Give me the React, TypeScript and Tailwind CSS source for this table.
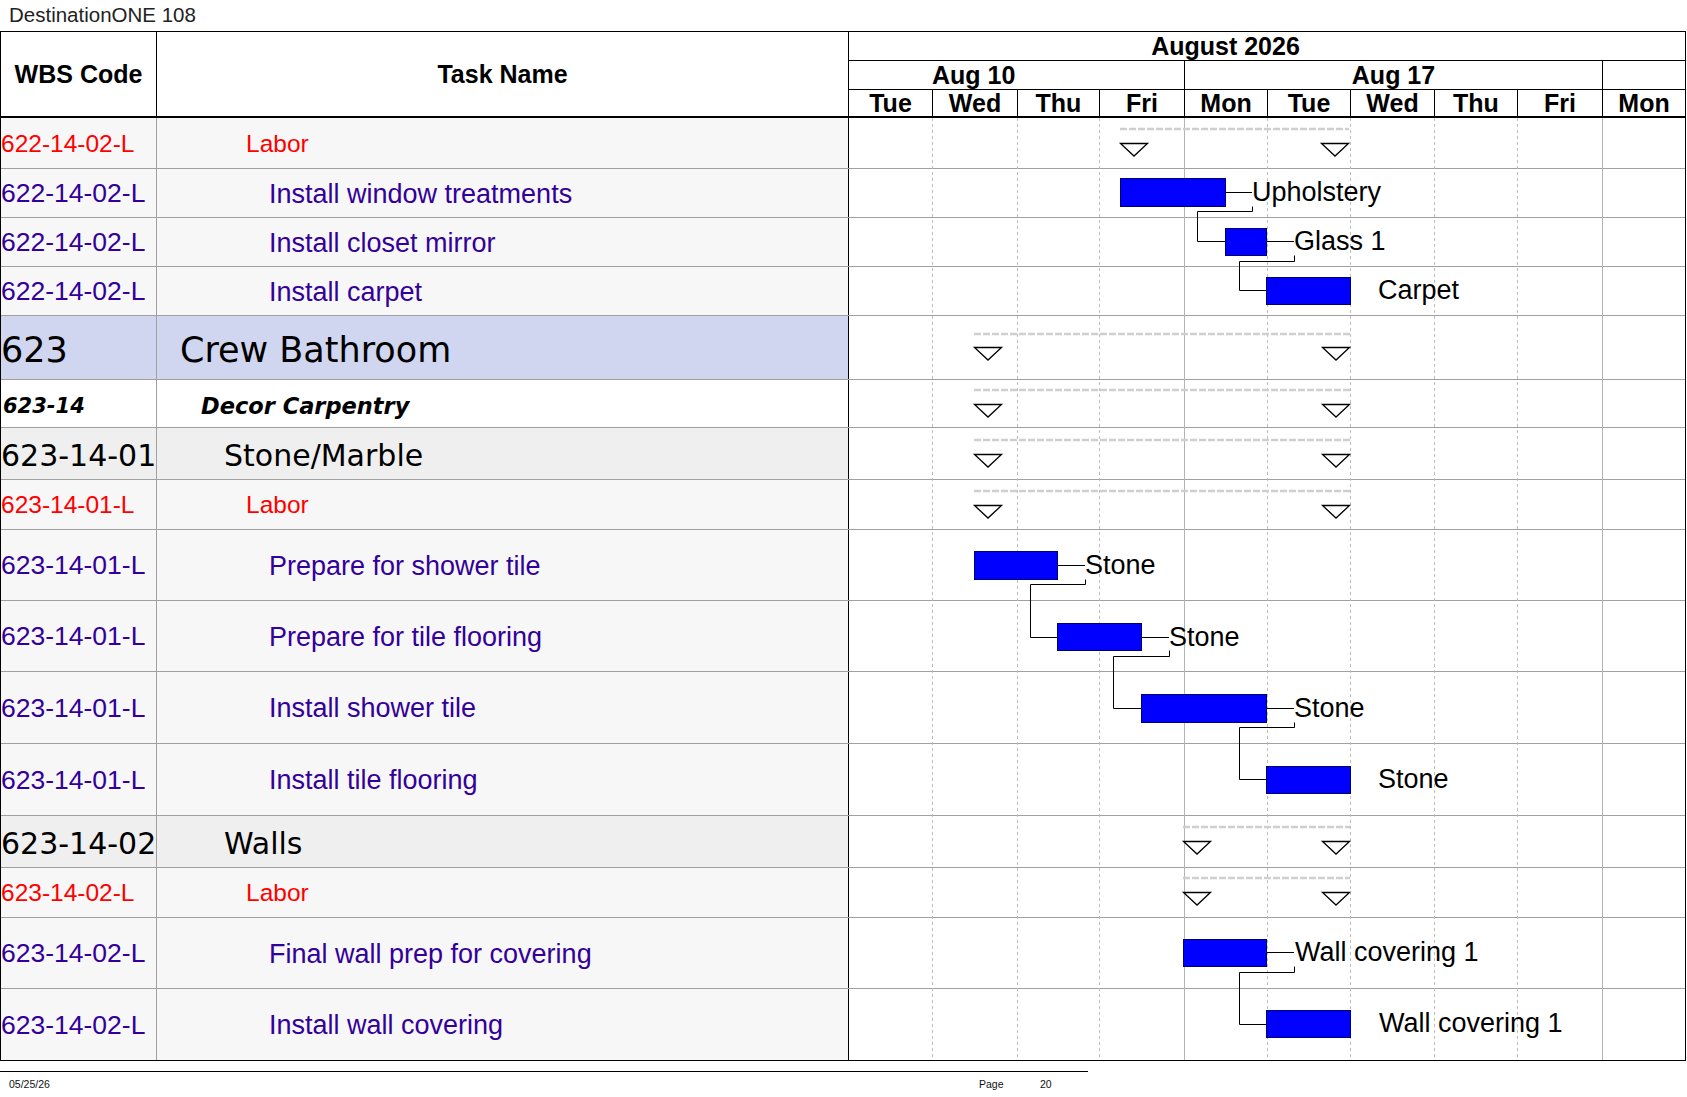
import React from "react";

type Row = {
  h: string;
  kind: "labor" | "task" | "l1" | "l2" | "l3";
  code: string;
  name: string;
};

const rows: Row[] = [
  { h: "h-[51px]", kind: "labor", code: "622-14-02-L", name: "Labor" },
  { h: "h-[49px]", kind: "task", code: "622-14-02-L", name: "Install window treatments" },
  { h: "h-[49px]", kind: "task", code: "622-14-02-L", name: "Install closet mirror" },
  { h: "h-[49px]", kind: "task", code: "622-14-02-L", name: "Install carpet" },
  { h: "h-[64px]", kind: "l1", code: "623", name: "Crew Bathroom" },
  { h: "h-[48px]", kind: "l2", code: "623-14", name: "Decor Carpentry" },
  { h: "h-[52px]", kind: "l3", code: "623-14-01", name: "Stone/Marble" },
  { h: "h-[50px]", kind: "labor", code: "623-14-01-L", name: "Labor" },
  { h: "h-[71px]", kind: "task", code: "623-14-01-L", name: "Prepare for shower tile" },
  { h: "h-[71px]", kind: "task", code: "623-14-01-L", name: "Prepare for tile flooring" },
  { h: "h-[72px]", kind: "task", code: "623-14-01-L", name: "Install shower tile" },
  { h: "h-[72px]", kind: "task", code: "623-14-01-L", name: "Install tile flooring" },
  { h: "h-[52px]", kind: "l3", code: "623-14-02", name: "Walls" },
  { h: "h-[50px]", kind: "labor", code: "623-14-02-L", name: "Labor" },
  { h: "h-[71px]", kind: "task", code: "623-14-02-L", name: "Final wall prep for covering" },
  { h: "h-[71px]", kind: "task", code: "623-14-02-L", name: "Install wall covering" },
];

const styles: Record<Row["kind"], { bg: string; code: string; name: string }> = {
  labor: {
    bg: "bg-[#f7f7f7]",
    code: "pt-[2px] text-[24.5px] text-[#ff0000] font-['Liberation_Sans',Arial,sans-serif]",
    name: "pt-[2px] pl-[89px] text-[24.5px] text-[#ff0000] font-['Liberation_Sans',Arial,sans-serif]",
  },
  task: {
    bg: "bg-[#f7f7f7]",
    code: "pt-[2px] text-[26.5px] text-[#330099] font-['Liberation_Sans',Arial,sans-serif]",
    name: "pt-[2px] pl-[112px] text-[27px] text-[#330099] font-['Liberation_Sans',Arial,sans-serif]",
  },
  l1: {
    bg: "bg-[#d0d6ef]",
    code: "pt-[6px] text-[35px] text-black font-['DejaVu_Sans',sans-serif]",
    name: "pt-[6px] pl-[23px] text-[35px] text-black font-['DejaVu_Sans',sans-serif]",
  },
  l2: {
    bg: "bg-white",
    code: "pt-[6px] pl-[2px] text-[21px] font-bold italic text-black font-['DejaVu_Sans',sans-serif]",
    name: "pt-[6px] pl-[44px] text-[22.5px] font-bold italic text-black font-['DejaVu_Sans',sans-serif]",
  },
  l3: {
    bg: "bg-[#efefef]",
    code: "pt-[4px] text-[30px] text-black font-['DejaVu_Sans',sans-serif]",
    name: "pt-[4px] pl-[67px] text-[30px] text-black font-['DejaVu_Sans',sans-serif]",
  },
};

const days = [
  { d: "Tue", w: "w-[84px] border-r border-black" },
  { d: "Wed", w: "w-[85px] border-r border-black" },
  { d: "Thu", w: "w-[82px] border-r border-black" },
  { d: "Fri", w: "w-[85px] border-r border-black" },
  { d: "Mon", w: "w-[83px] border-r border-black" },
  { d: "Tue", w: "w-[83px] border-r border-black" },
  { d: "Wed", w: "w-[84px] border-r border-black" },
  { d: "Thu", w: "w-[83px] border-r border-black" },
  { d: "Fri", w: "w-[85px] border-r border-black" },
  { d: "Mon", w: "w-[82px]" },
];

const dashedX = [83, 168, 250, 418, 501, 585, 668];
const solidX = [335, 753];

const bars = [
  { x: 271, y: 60, w: 105, h: 28 },
  { x: 376, y: 110, w: 41, h: 27 },
  { x: 417, y: 159, w: 84, h: 27 },
  { x: 125, y: 433, w: 83, h: 28 },
  { x: 208, y: 505, w: 84, h: 27 },
  { x: 292, y: 576, w: 125, h: 28 },
  { x: 417, y: 648, w: 84, h: 27 },
  { x: 334, y: 821, w: 83, h: 27 },
  { x: 417, y: 892, w: 84, h: 27 },
];

const leaders = [
  [376, 74, 403],
  [417, 123, 445],
  [208, 447, 236],
  [292, 519, 320],
  [417, 590, 445],
  [417, 834, 445],
];

const connectors = [
  [[403, 88], [403, 93], [348, 93], [348, 123], [376, 123]],
  [[445, 137], [445, 143], [390, 143], [390, 172], [417, 172]],
  [[236, 461], [236, 466], [181, 466], [181, 519], [208, 519]],
  [[320, 532], [320, 538], [264, 538], [264, 590], [292, 590]],
  [[445, 604], [445, 609], [390, 609], [390, 661], [417, 661]],
  [[445, 848], [445, 854], [390, 854], [390, 906], [417, 906]],
];

const summaries = [
  { x1: 271, x2: 500, dy: 11, ty: 25 },
  { x1: 125, x2: 501, dy: 216, ty: 229 },
  { x1: 125, x2: 501, dy: 272, ty: 286 },
  { x1: 125, x2: 501, dy: 322, ty: 336 },
  { x1: 125, x2: 501, dy: 373, ty: 387 },
  { x1: 334, x2: 501, dy: 709, ty: 723 },
  { x1: 334, x2: 501, dy: 760, ty: 774 },
];

const labels = [
  { t: "Upholstery", x: 403, cy: 74 },
  { t: "Glass 1", x: 445, cy: 123 },
  { t: "Carpet", x: 529, cy: 172 },
  { t: "Stone", x: 236, cy: 447 },
  { t: "Stone", x: 320, cy: 519 },
  { t: "Stone", x: 445, cy: 590 },
  { t: "Stone", x: 529, cy: 661 },
  { t: "Wall covering 1", x: 446, cy: 834 },
  { t: "Wall covering 1", x: 530, cy: 905 },
];

function GanttOverlay() {
  return (
    <div className="absolute top-0 left-[848px] w-[836px] h-[942px] pointer-events-none">
      <svg className="absolute inset-0" width={836} height={942} viewBox="0 0 836 942">
        {dashedX.map((x) => (
          <line key={"d" + x} x1={x + 0.5} y1={0} x2={x + 0.5} y2={942} stroke="#bdbdbd" strokeWidth={1} strokeDasharray="3 3" />
        ))}
        {solidX.map((x) => (
          <line key={"s" + x} x1={x + 0.5} y1={0} x2={x + 0.5} y2={942} stroke="#b4b4b4" strokeWidth={1} />
        ))}
        {summaries.map((s, i) => (
          <g key={"sum" + i}>
            <line x1={s.x1} y1={s.dy} x2={s.x2} y2={s.dy} stroke="#cfcfcf" strokeWidth={2.5} strokeDasharray="7 2" />
            <polygon
              points={`${s.x1 + 0.5},${s.ty + 0.5} ${s.x1 + 27.5},${s.ty + 0.5} ${s.x1 + 14},${s.ty + 13}`}
              fill="white"
              stroke="black"
              strokeWidth={1.3}
            />
            <polygon
              points={`${s.x2 - 27.5},${s.ty + 0.5} ${s.x2 - 0.5},${s.ty + 0.5} ${s.x2 - 14},${s.ty + 13}`}
              fill="white"
              stroke="black"
              strokeWidth={1.3}
            />
          </g>
        ))}
        {leaders.map(([x1, y, x2], i) => (
          <line key={"l" + i} x1={x1} y1={y + 0.5} x2={x2} y2={y + 0.5} stroke="black" strokeWidth={1} />
        ))}
        {connectors.map((pts, i) => (
          <polyline
            key={"c" + i}
            points={pts.map(([x, y]) => `${x + 0.5},${y + 0.5}`).join(" ")}
            fill="none"
            stroke="black"
            strokeWidth={1}
          />
        ))}
        {bars.map((b, i) => (
          <rect key={"b" + i} x={b.x + 0.5} y={b.y + 0.5} width={b.w} height={b.h} fill="#0000ff" stroke="#00006a" strokeWidth={1} />
        ))}
      </svg>
      {labels.map((l, i) => (
        <span
          key={"t" + i}
          className="absolute whitespace-nowrap text-[27px] leading-[27px] text-black font-['Liberation_Sans',Arial,sans-serif]"
          style={{ left: l.x, top: l.cy - 13 }}
        >
          {l.t}
        </span>
      ))}
    </div>
  );
}

export default function App() {
  return (
    <div className="w-[1687px] h-[1097px] bg-white relative overflow-hidden font-['Liberation_Sans',Arial,sans-serif] text-black">
      <div className="h-[31px] pl-[9px] pt-[5px] text-[20.5px] leading-[20px] text-[#222]">DestinationONE 108</div>

      <div className="w-[1686px] border border-black">
        {/* Header */}
        <div className="flex h-[86px] border-b-2 border-black">
          <div className="w-[156px] shrink-0 border-r border-black flex items-center justify-center pt-[2px] font-bold text-[25px]">
            WBS Code
          </div>
          <div className="w-[692px] shrink-0 border-r border-black flex items-center justify-center pt-[2px] font-bold text-[25px]">
            Task Name
          </div>
          <div className="w-[836px] shrink-0 flex flex-col font-bold text-[25px] leading-[26px]">
            <div className="h-[30px] border-b border-black flex items-center">
              <div className="w-[753px] flex justify-center">August 2026</div>
            </div>
            <div className="h-[29px] border-b border-black flex">
              <div className="w-[336px] border-r border-black flex items-center pl-[83px]">Aug 10</div>
              <div className="w-[418px] border-r border-black flex items-center justify-center">Aug 17</div>
              <div className="flex-1" />
            </div>
            <div className="flex-1 flex">
              {days.map((d, i) => (
                <div key={i} className={`${d.w} flex items-center justify-center`}>
                  {d.d}
                </div>
              ))}
            </div>
          </div>
        </div>

        {/* Body */}
        <div className="relative">
          {rows.map((r, i) => {
            const s = styles[r.kind];
            const last = i === rows.length - 1;
            return (
              <div key={i} className={`flex ${r.h} ${last ? "" : "border-b border-[#a0a0a0]"}`}>
                <div className={`w-[156px] shrink-0 border-r border-[#a0a0a0] overflow-hidden flex items-center whitespace-nowrap ${s.bg}`}>
                  <span className={s.code}>{r.code}</span>
                </div>
                <div className={`w-[692px] shrink-0 border-r border-black flex items-center whitespace-nowrap ${s.bg}`}>
                  <span className={s.name}>{r.name}</span>
                </div>
                <div className="w-[836px] shrink-0 bg-white" />
              </div>
            );
          })}
          <GanttOverlay />
        </div>
      </div>

      <div className="mt-[10px] w-[1088px] h-px bg-black" />
      <div className="flex mt-[6px] text-[10.5px] leading-[12px] text-[#111]">
        <span className="pl-[9px] w-[979px]">05/25/26</span>
        <span className="w-[61px]">Page</span>
        <span>20</span>
      </div>
    </div>
  );
}
